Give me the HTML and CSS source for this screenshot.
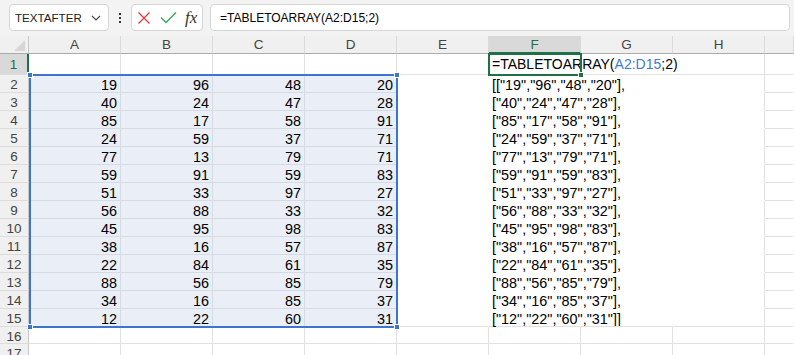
FILE: index.html
```html
<!DOCTYPE html>
<html lang="en">

<head>
    <meta charset="UTF-8">
    <meta name="viewport" content="width=device-width, initial-scale=1.0">
    <title>TABLETOARRAY</title>
    <link rel="stylesheet" href="styles.css">
</head>

<body>
    <div class="toolbar">
        <div class="namebox">
            <span>TEXTAFTER</span>
            <svg width="10" height="6" viewBox="0 0 10 6"><path d="M1 1l4 4 4-4" fill="none" stroke="#444" stroke-width="1.1"/></svg>
        </div>
        <div class="grip"><i></i><i></i><i></i></div>
        <div class="fxbox">
            <svg class="cancel" width="14" height="14" viewBox="0 0 14 14"><path d="M1.5 1.5l11 11M12.5 1.5l-11 11" fill="none" stroke="#e0393e" stroke-width="1.3"/></svg>
            <svg class="enter" width="17" height="13" viewBox="0 0 17 13"><path d="M1 6.5l5 5 10-10" fill="none" stroke="#34a853" stroke-width="1.3"/></svg>
            <span class="fx">fx</span>
        </div>
        <div class="formula">=TABLETOARRAY(A2:D15;2)</div>
    </div>

    <div class="sheet" id="sheet">
        <div class="ref-range">
            <i class="handle tl"></i><i class="handle tr"></i><i class="handle bl"></i><i class="handle br"></i>
        </div>
        <div class="active-cell"><i class="handle br"></i></div>
    </div>

    <script>
        const data = [
            [19, 96, 48, 20],
            [40, 24, 47, 28],
            [85, 17, 58, 91],
            [24, 59, 37, 71],
            [77, 13, 79, 71],
            [59, 91, 59, 83],
            [51, 33, 97, 27],
            [56, 88, 33, 32],
            [45, 95, 98, 83],
            [38, 16, 57, 87],
            [22, 84, 61, 35],
            [88, 56, 85, 79],
            [34, 16, 85, 37],
            [12, 22, 60, 31]
        ];
        const letters = ["A", "B", "C", "D", "E", "F", "G", "H", ""];
        const sheet = document.getElementById("sheet");
        const overlays = sheet.firstElementChild;

        // every cell gets its grid line so the overlays can sit on top
        function add(cls, row, col, text) {
            const el = document.createElement("div");
            el.className = cls;
            el.style.gridRow = row;
            el.style.gridColumn = col;
            if (text !== undefined) el.textContent = text;
            sheet.insertBefore(el, overlays);
            return el;
        }

        const corner = add("corner", 1, 1);
        corner.innerHTML = '<svg width="12" height="11" viewBox="0 0 12 11"><path d="M11 0v11H0z" fill="#d6d6d6"/></svg>';
        letters.forEach((l, c) => add(l === "F" ? "colhead current" : "colhead", 1, c + 2, l));

        for (let r = 1; r <= 17; r++) {
            add(r === 1 ? "rowhead current" : "rowhead", r + 1, 1, r);
            const inArray = r >= 2 && r <= 15;
            const values = inArray ? data[r - 2] : null;

            letters.forEach((l, c) => {
                let cls = "cell";
                let text;

                if (inArray && c < 4) {
                    cls += " num";
                    text = values[c];
                } else if (inArray && c >= 4 && c <= 7) {
                    if (r < 15) cls += " no-b";
                    if (c < 7) cls += " no-r";
                    if (c === 5) {
                        cls += " spill";
                        text = (r === 2 ? "[" : "") + "[" + values.map(v => '"' + v + '"').join(",") + "]" + (r === 15 ? "]" : ",");
                    }
                } else if (r === 1 && (c === 5 || c === 6)) {
                    cls += " no-r";
                }

                if (c === 8) cls += " no-r";

                const cell = add(cls, r + 1, c + 2, text);
                if (r === 1 && c === 5) {
                    cell.className += " edit";
                    cell.innerHTML = '=TABLETOARRAY(<span class="ref">A2:D15</span>;2)';
                }
            });
        }
    </script>
</body>

</html>
```

FILE: styles.css
```css
* {
    box-sizing: border-box;
    margin: 0;
    padding: 0;
}

body {
    font-family: "Liberation Sans", Arial, sans-serif;
    background: #fff;
    color: #000;
    width: 794px;
    height: 355px;
    overflow: hidden;
}

/* formula bar */
.toolbar {
    display: flex;
    align-items: center;
    height: 36px;
    padding: 0 4px 1px 9px;
    background: #f3f3f3;
}

.namebox,
.fxbox,
.formula {
    height: 27px;
    background: #fff;
    border: 1px solid #d6d6d6;
    border-radius: 4px;
    display: flex;
    align-items: center;
}

.namebox {
    width: 100px;
    padding: 0 7px 0 5px;
    justify-content: space-between;
    font-size: 11.6px;
    color: #222;
}

.grip {
    width: 22px;
    display: flex;
    flex-direction: column;
    align-items: center;
    gap: 2px;
}

.grip i {
    width: 2px;
    height: 2px;
    background: #333;
}

.fxbox {
    width: 72px;
    padding-left: 5px;
}

.fxbox .enter {
    margin-left: 9px;
}

.fx {
    margin-left: 8px;
    font-family: "Liberation Serif", "Times New Roman", serif;
    font-style: italic;
    font-size: 17px;
    color: #333;
}

.formula {
    flex: 1;
    margin-left: 7px;
    padding-left: 9px;
    font-size: 12px;
}

/* grid */
.sheet {
    display: grid;
    grid-template-columns: 29px repeat(8, 92px) 1fr;
    grid-template-rows: 18px 21px repeat(14, 18px) 17px 18px;
    background: #fff;
}

.corner {
    background: #f0f0f0;
    border-right: 1px solid #c8c8c8;
    border-bottom: 1px solid #ababab;
    display: flex;
    justify-content: flex-end;
    align-items: flex-end;
    padding: 0 2px 2px 0;
}

.colhead {
    background: #f0f0f0;
    border-right: 1px solid #dadada;
    border-bottom: 1px solid #ababab;
    text-align: center;
    font-size: 13.5px;
    line-height: 18px;
    color: #444;
}

.colhead.current {
    background: #d9d9d9;
    border-bottom: 2px solid #1e7145;
    color: #1e7145;
}

.rowhead {
    background: #f0f0f0;
    border-right: 1px solid #c8c8c8;
    border-bottom: 1px solid #dcdcdc;
    text-align: center;
    font-size: 13.5px;
    padding-top: 2px;
    line-height: 16px;
    color: #444;
}

.rowhead.current {
    background: #d9d9d9;
    border-right: 2px solid #1e7145;
    color: #1e7145;
    padding-top: 0;
    line-height: 21px;
}

.cell {
    border-right: 1px solid #e1e1e1;
    border-bottom: 1px solid #e1e1e1;
    padding: 2px 3px 0;
    font-size: 14.4px;
    line-height: 16px;
    white-space: nowrap;
}

.cell.num {
    text-align: right;
    background: #e9eef7;
    border-color: #d5dae3;
}

.cell.no-r {
    border-right-color: transparent;
}

.cell.no-b {
    border-bottom-color: transparent;
}

.cell.spill,
.cell.edit {
    overflow: visible;
}

.cell.edit {
    font-size: 14px;
    padding-top: 0;
    line-height: 20px;
}

.ref {
    color: #3f7ad6;
}

/* overlays */
.ref-range {
    grid-column: 2 / 6;
    grid-row: 3 / 17;
    margin: -1px -1px -1px 0;
    border: 2px solid #3d74cf;
    position: relative;
    pointer-events: none;
}

.active-cell {
    grid-column: 7 / 8;
    grid-row: 2 / 3;
    margin: -1px;
    border: 2px solid #1e7145;
    position: relative;
    pointer-events: none;
}

.handle {
    position: absolute;
    width: 6px;
    height: 6px;
    background: #3d74cf;
    border: 1px solid #fff;
}

.active-cell .handle {
    background: #1e7145;
}

.handle.tl { top: -4px; left: -4px; }
.handle.tr { top: -4px; right: -4px; }
.handle.bl { bottom: -4px; left: -4px; }
.handle.br { bottom: -4px; right: -4px; }
```
